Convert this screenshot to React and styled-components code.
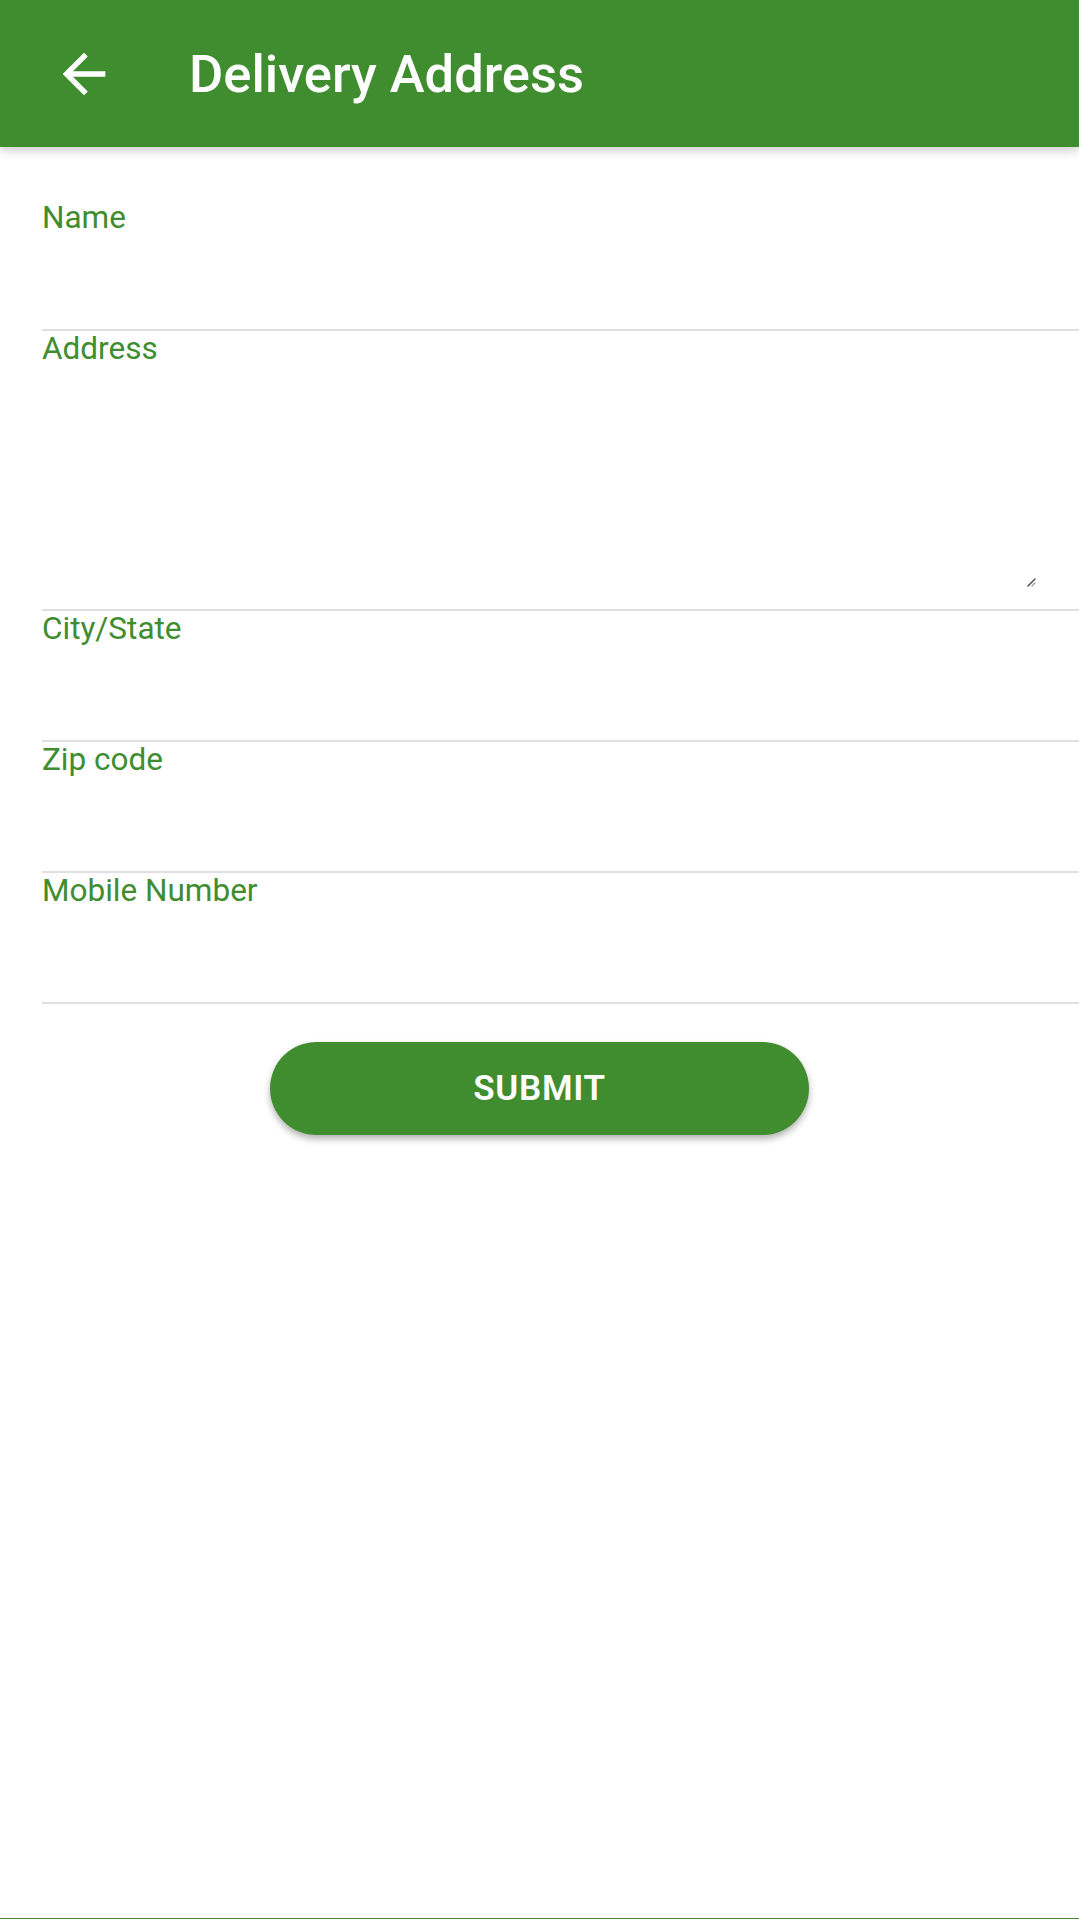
import styled, { createGlobalStyle } from 'styled-components';

const GREEN = '#408D30';

const GlobalStyle = createGlobalStyle`
  html, body {
    margin: 0;
    padding: 0;
    background: #ffffff;
    font-family: Roboto, "Noto Sans", "Liberation Sans", sans-serif;
  }
  * {
    box-sizing: border-box;
  }
`;

const Screen = styled.div`
  min-height: 100vh;
  display: flex;
  flex-direction: column;
  background: #ffffff;
`;

const AppBar = styled.header`
  height: 147px;
  background: ${GREEN};
  display: flex;
  align-items: center;
  position: relative;
  z-index: 1;
  box-shadow: 0 3px 10px rgba(0, 0, 0, 0.22);
`;

const BackButton = styled.button`
  width: 64px;
  height: 64px;
  margin-left: 52px;
  padding: 0;
  border: none;
  background: transparent;
  color: #ffffff;
  display: flex;
  align-items: center;
  justify-content: center;
  cursor: pointer;

  svg {
    width: 64px;
    height: 64px;
    display: block;
  }
`;

const Title = styled.h1`
  margin: 0 0 0 73px;
  color: #ffffff;
  font-size: 52.5px;
  font-weight: 500;
  letter-spacing: 0;
`;

const Form = styled.form`
  display: flex;
  flex-direction: column;
  padding-top: 53px;
`;

const FieldList = styled.div`
  display: flex;
  flex-direction: column;
  padding-left: 42px;
`;

const Field = styled.label`
  position: relative;
  display: flex;
  flex-direction: column;
  border-bottom: 2px solid #e0e0e0;
`;

const FieldLabel = styled.span`
  color: ${GREEN};
  font-size: 31.5px;
  line-height: 36px;
  font-weight: 400;
`;

const TextInput = styled.input`
  height: 93px;
  border: none;
  outline: none;
  background: transparent;
  padding: 0;
  font-family: inherit;
  font-size: 31px;
  color: #222;
`;

const TextArea = styled.textarea`
  height: 242px;
  border: none;
  outline: none;
  background: transparent;
  padding: 0;
  resize: none;
  font-family: inherit;
  font-size: 31px;
  color: #222;
`;

const ResizeGrip = styled.svg`
  position: absolute;
  right: 43px;
  bottom: 22px;
  width: 9px;
  height: 9px;
  pointer-events: none;
`;

const ButtonRow = styled.div`
  display: flex;
  justify-content: center;
  margin-top: 38px;
`;

const SubmitButton = styled.button`
  width: 539px;
  height: 93px;
  border: none;
  border-radius: 47px;
  background: ${GREEN};
  color: #ffffff;
  font-family: inherit;
  font-size: 35px;
  font-weight: 600;
  letter-spacing: 0.02em;
  text-transform: uppercase;
  box-shadow: 0 4px 7px rgba(0, 0, 0, 0.3);
  cursor: pointer;
`;

const BottomEdge = styled.div`
  margin-top: auto;
  height: 1px;
  background: ${GREEN};
`;

const fields = [
  { name: 'name', label: 'Name' },
  { name: 'address', label: 'Address', multiline: true },
  { name: 'city', label: 'City/State' },
  { name: 'zip', label: 'Zip code' },
  { name: 'mobile', label: 'Mobile Number' },
];

const ArrowBack = () => (
  <svg viewBox="0 0 24 24" fill="currentColor">
    <path d="M20 11H7.83l5.59-5.59L12 4l-8 8 8 8 1.41-1.41L7.83 13H20v-2z" />
  </svg>
);

const App = () => {
  return (
    <Screen>
      <GlobalStyle />
      <AppBar>
        <BackButton type="button" aria-label="Back">
          <ArrowBack />
        </BackButton>
        <Title>Delivery Address</Title>
      </AppBar>

      <Form onSubmit={e => e.preventDefault()}>
        <FieldList>
          {fields.map(field => (
            <Field key={field.name}>
              <FieldLabel>{field.label}</FieldLabel>
              {field.multiline ? (
                <>
                  <TextArea name={field.name} />
                  <ResizeGrip viewBox="0 0 9 9">
                    <path d="M1 8 L8 1" stroke="#555" strokeWidth="1.6" strokeLinecap="round" />
                    <path d="M5 8 L8 5" stroke="#999" strokeWidth="1.2" strokeLinecap="round" />
                  </ResizeGrip>
                </>
              ) : (
                <TextInput name={field.name} type="text" />
              )}
            </Field>
          ))}
        </FieldList>

        <ButtonRow>
          <SubmitButton type="submit">Submit</SubmitButton>
        </ButtonRow>
      </Form>

      <BottomEdge />
    </Screen>
  );
};

export default App;
